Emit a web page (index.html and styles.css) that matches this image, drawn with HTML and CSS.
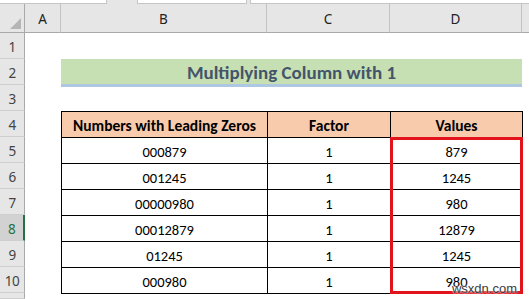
FILE: index.html
```html
<!DOCTYPE html>
<html>
<head>
<meta charset="utf-8">
<link rel="stylesheet" href="styles.css">
</head>
<body>
<div class="top">
  <div class="box b1"></div>
  <div class="box b2"></div>
  <div class="box b3"></div>
</div>
<div class="sheet">
  <div class="ch corner"><svg class="tri" width="11" height="11" viewBox="0 0 11 11"><polygon points="11,0 11,11 0,11" fill="#b5b5b5"/></svg></div>
  <div class="ch">A</div>
  <div class="ch">B</div>
  <div class="ch">C</div>
  <div class="ch">D</div>
  <div class="ch last"></div>

  <div class="rh">1</div>
  <div class="rh">2</div>
  <div class="rh">3</div>
  <div class="rh">4</div>
  <div class="rh">5</div>
  <div class="rh">6</div>
  <div class="rh">7</div>
  <div class="rh sel">8</div>
  <div class="rh">9</div>
  <div class="rh">10</div>
  <div class="rh"></div>

  <div class="title">Multiplying Column with 1</div>

  <div class="table">
    <div class="cell head">Numbers with Leading Zeros</div>
    <div class="cell head">Factor</div>
    <div class="cell head">Values</div>

    <div class="cell">000879</div><div class="cell">1</div><div class="cell">879</div>
    <div class="cell">001245</div><div class="cell">1</div><div class="cell">1245</div>
    <div class="cell">00000980</div><div class="cell">1</div><div class="cell">980</div>
    <div class="cell">00012879</div><div class="cell">1</div><div class="cell">12879</div>
    <div class="cell">01245</div><div class="cell">1</div><div class="cell">1245</div>
    <div class="cell">000980</div><div class="cell">1</div><div class="cell">980</div>

    <div class="redbox"></div>
  </div>
</div>
<div class="watermark">wsxdn.com</div>
</body>
</html>
```

FILE: styles.css
```css
html, body {
  margin: 0;
  padding: 0;
}
body {
  width: 529px;
  height: 299px;
  overflow: hidden;
  background: #ffffff;
  position: relative;
  font-family: Carlito, Lato, "Open Sans", sans-serif;
}
.top {
  display: flex;
  height: 4px;
  background: #e6e6e6;
}
.box {
  height: 3px;
  background: #ffffff;
  border-bottom: 1px solid #c6c6c6;
  box-sizing: content-box;
}
.b1 { width: 106px; border-right: 1px solid #c6c6c6; }
.b2 { width: 108px; margin-left: 30px; border-left: 1px solid #c6c6c6; border-right: 1px solid #c6c6c6; }
.b3 { flex: 1; margin-left: 3px; border-left: 1px solid #c6c6c6; }

.sheet {
  display: grid;
  grid-template-columns: 25px 36px 206px 123px 132px 1fr;
  grid-template-rows: 29px repeat(10, 26px) 6px;
  overflow: hidden;
}
.ch {
  background: #e6e6e6;
  border-right: 1px solid #c3c3c3;
  border-bottom: 1px solid #a9a9a9;
  box-sizing: border-box;
  display: flex;
  align-items: center;
  justify-content: center;
  font-family: "Noto Sans", "Open Sans", sans-serif;
  font-size: 13.5px;
  color: #222;
  padding-top: 1px;
}
.ch.last { border-right: none; }
.corner {
  position: relative;
  border-right: 1px solid #a9a9a9;
}
.tri {
  position: absolute;
  right: 3px;
  bottom: 3px;
}
.rh {
  grid-column: 1;
  background: #e6e6e6;
  border-right: 1px solid #a9a9a9;
  border-bottom: 1px solid #cfcfcf;
  box-sizing: border-box;
  display: flex;
  align-items: center;
  justify-content: center;
  font-family: "Noto Sans", "Open Sans", sans-serif;
  font-size: 13.5px;
  letter-spacing: -0.5px;
  color: #444;
  padding-top: 2px;
}
.rh.sel {
  background: #d2d2d2;
  color: #217346;
  border-right: 2px solid #217346;
}
.title {
  grid-column: 3 / 6;
  grid-row: 3;
  align-self: start;
  height: 24px;
  background: #c6e0b4;
  border-bottom: 3px solid #aec8e4;
  display: flex;
  align-items: center;
  justify-content: center;
  font-weight: bold;
  font-size: 19px;
  color: #44546a;
  padding-top: 1px;
  box-sizing: content-box;
}
.table {
  grid-column: 3 / 6;
  grid-row: 5 / 12;
  position: relative;
  align-self: start;
  justify-self: start;
  display: grid;
  grid-template-columns: 206px 123px 132px;
  grid-auto-rows: 26px;
  border-left: 1px solid #000;
  border-top: 1px solid #000;
}
.cell {
  border-right: 1px solid #000;
  border-bottom: 1px solid #000;
  box-sizing: border-box;
  display: flex;
  align-items: center;
  justify-content: center;
  font-size: 14.5px;
  color: #000;
  padding-top: 2px;
}
.cell.head {
  background: #f8cbad;
  font-weight: bold;
  font-size: 15.5px;
}
.redbox {
  position: absolute;
  left: 328px;
  top: 25px;
  width: 133px;
  height: 157px;
  border: 3px solid #e3131b;
  box-sizing: border-box;
  pointer-events: none;
}
.watermark {
  position: absolute;
  right: 12px;
  bottom: 3px;
  font-family: "Liberation Sans", Arial, sans-serif;
  font-size: 13px;
  color: #3a3a3a;
  text-shadow: 0 0 2px #fff, 0 0 2px #fff;
}
```
